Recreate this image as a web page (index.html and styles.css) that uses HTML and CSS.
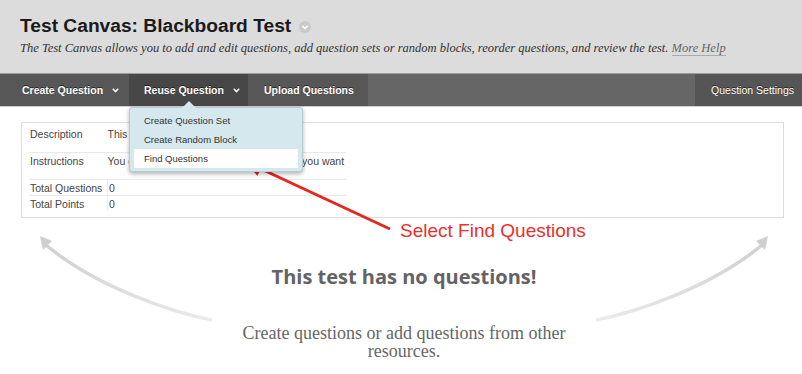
FILE: index.html
```html
<!DOCTYPE html>
<html lang="en">
<head>
  <meta charset="UTF-8">
  <title>Test Canvas: Blackboard Test</title>
  <link rel="stylesheet" href="styles.css">
</head>
<body>

  <header class="page-head">
    <h1>Test Canvas: Blackboard Test
      <span class="title-menu">
        <svg width="12" height="12" viewBox="0 0 12 12"><circle cx="6" cy="6" r="6" fill="#c9c9c9"/><path d="M3.4 4.9 L6 7.4 L8.6 4.9" fill="none" stroke="#fff" stroke-width="1.5"/></svg>
      </span>
    </h1>
    <p class="intro">The Test Canvas allows you to add and edit questions, add question sets or random blocks, reorder questions, and review the test. <a href="#">More Help</a></p>
  </header>

  <nav class="action-bar">
    <div class="tab tab-first">Create Question
      <svg class="chev" width="7" height="5" viewBox="0 0 7 5"><path d="M0.8 0.8 L3.5 3.6 L6.2 0.8" fill="none" stroke="#fff" stroke-width="1.5"/></svg>
    </div>
    <div class="tab tab-open">Reuse Question
      <svg class="chev" width="7" height="5" viewBox="0 0 7 5"><path d="M0.8 0.8 L3.5 3.6 L6.2 0.8" fill="none" stroke="#fff" stroke-width="1.5"/></svg>
      <!-- open dropdown -->
      <ul class="dropdown">
        <li>Create Question Set</li>
        <li>Create Random Block</li>
        <li class="active">Find Questions</li>
      </ul>
    </div>
    <div class="tab tab-upload">Upload Questions</div>
    <div class="tab tab-right">Question Settings</div>
  </nav>

  <div class="details">
    <table class="info">
      <tr class="tall">
        <td class="label">Description</td>
        <td>This is a sample test</td>
      </tr>
      <tr class="tall">
        <td class="label">Instructions</td>
        <td>You can add your own instructions here if you want</td>
      </tr>
      <tr class="total">
        <td class="label">Total Questions</td>
        <td class="num">0</td>
      </tr>
      <tr class="total last">
        <td class="label">Total Points</td>
        <td class="num">0</td>
      </tr>
    </table>
  </div>

  <!-- annotation arrow -->
  <div class="callout">
    <svg width="360" height="95" viewBox="0 0 360 95">
      <line x1="155" y1="79" x2="24" y2="18" stroke="#e5271f" stroke-width="3"/>
      <polygon points="10,12 28.5,12.5 22.5,26" fill="#e5271f"/>
    </svg>
    <span class="callout-label">Select Find Questions</span>
  </div>

  <div class="empty-state">
    <svg class="arc" width="195" height="95" viewBox="0 0 195 95">
      <defs>
        <linearGradient id="fadeLeft" gradientUnits="userSpaceOnUse" x1="10" y1="10" x2="185" y2="90">
          <stop offset="0" stop-color="#cfcfcf"/>
          <stop offset="1" stop-color="#ececec"/>
        </linearGradient>
      </defs>
      <path d="M182 90 C150 84 70 60 16 15" fill="none" stroke="url(#fadeLeft)" stroke-width="3.5"/>
      <polygon points="10,6 22,11 13,20" fill="#cfcfcf"/>
    </svg>
    <div class="empty-text">
      <h2>This test has no questions!</h2>
      <p>Create questions or add questions from other resources.</p>
    </div>
    <svg class="arc arc-right" width="195" height="95" viewBox="0 0 195 95">
      <defs>
        <linearGradient id="fadeRight" gradientUnits="userSpaceOnUse" x1="10" y1="10" x2="185" y2="90">
          <stop offset="0" stop-color="#cfcfcf"/>
          <stop offset="1" stop-color="#ececec"/>
        </linearGradient>
      </defs>
      <path d="M182 90 C150 84 70 60 16 15" fill="none" stroke="url(#fadeRight)" stroke-width="3.5"/>
      <polygon points="10,6 22,11 13,20" fill="#cfcfcf"/>
    </svg>
  </div>

</body>
</html>
```

FILE: styles.css
```css
body {
  margin: 0;
  background-color: #fff;
  font-family: 'Liberation Sans', Arial, sans-serif;
  color: #333;
}

.page-head {
  background-color: #dcdcdc;
  padding: 14px 20px 17px;
  border-bottom: 1px solid #9c9c9c;
}

h1 {
  margin: 0;
  font-size: 19.2px;
  line-height: 24px;
  font-weight: bold;
  color: #1a1a1a;
}

.title-menu svg {
  vertical-align: -1px;
  margin-left: 2px;
}

.intro {
  margin: 2px 0 0;
  font-family: 'Liberation Serif', 'Times New Roman', serif;
  font-style: italic;
  font-size: 12.5px;
  line-height: 16px;
  color: #333;
}

.intro a {
  color: #666;
  text-decoration: none;
  border-bottom: 1px solid #aaa;
}

.action-bar {
  display: flex;
  height: 32px;
  background-color: #666;
  border-bottom: 1px solid #d0d0d0;
}

.tab {
  position: relative;
  box-sizing: border-box;
  padding: 0 0 0 16px;
  line-height: 32px;
  font-size: 10.5px;
  font-weight: bold;
  color: #fff;
  background-color: #575757;
  text-shadow: 0 -1px 0 rgba(0, 0, 0, 0.6);
  white-space: nowrap;
}

.tab-first {
  width: 129px;
  padding-left: 22px;
}

.tab-open {
  width: 119px;
  padding-left: 15px;
  background-color: #474747;
}

.tab-upload {
  width: 120px;
}

.tab-right {
  margin-left: auto;
  padding: 0 8px 0 16px;
  font-weight: normal;
  background-color: #555;
}

.chev {
  margin-left: 6px;
  vertical-align: 1px;
}

.dropdown {
  position: absolute;
  top: 33px;
  left: 0;
  width: 164px;
  margin: 0;
  padding: 3px 4px;
  list-style: none;
  background-color: #d4e8ee;
  border: 1px solid #b9ccd2;
  border-radius: 3px;
  box-shadow: 0 2px 4px rgba(0, 0, 0, 0.3);
  z-index: 5;
}

.dropdown::before {
  content: "";
  position: absolute;
  top: -7px;
  left: 52px;
  border-left: 7px solid transparent;
  border-right: 7px solid transparent;
  border-bottom: 7px solid #d4e8ee;
}

.dropdown li {
  padding: 0 10px;
  line-height: 19px;
  font-size: 9.5px;
  font-weight: normal;
  color: #333;
  text-shadow: none;
}

.dropdown li.active {
  background-color: #fff;
}

.details {
  margin: 15px 18px 0 21px;
  padding: 0 8px 6px;
  border: 1px solid #ddd;
}

.info {
  border-collapse: collapse;
  width: 316px;
  font-size: 10.5px;
  line-height: 13px;
  color: #444;
}

.info td {
  padding: 2px 0 11px;
  vertical-align: top;
  border-bottom: 1px solid #e8e8e8;
  white-space: nowrap;
}

.info tr.tall:first-child td {
  padding-top: 5px;
}

.info .label {
  width: 77px;
}

.info tr.total td {
  padding-bottom: 0;
}

.info tr.total td.num {
  border-left: 1px solid #eee;
  padding-left: 1px;
}

.info tr.last td {
  border-bottom: none;
}

.callout {
  position: absolute;
  left: 235px;
  top: 150px;
  width: 360px;
  height: 95px;
}

.callout svg {
  display: block;
}

.callout-label {
  position: absolute;
  left: 165px;
  top: 70px;
  font-size: 19px;
  line-height: 22px;
  color: #e9302a;
  white-space: nowrap;
}

.empty-state {
  display: flex;
  align-items: flex-start;
  margin-top: 12px;
  padding: 0 24px 0 30px;
}

.arc {
  flex: none;
  display: block;
}

.arc-right {
  transform: scaleX(-1);
}

.empty-text {
  flex: 1;
  padding-top: 35px;
  text-align: center;
}

.empty-text h2 {
  margin: 0;
  font-family: 'Open Sans', sans-serif;
  font-size: 20px;
  line-height: 24px;
  font-weight: bold;
  color: #636363;
}

.empty-text p {
  max-width: 340px;
  margin: 35px auto 0;
  font-family: 'Liberation Serif', 'Times New Roman', serif;
  font-size: 18px;
  line-height: 18px;
  color: #666;
}
```
